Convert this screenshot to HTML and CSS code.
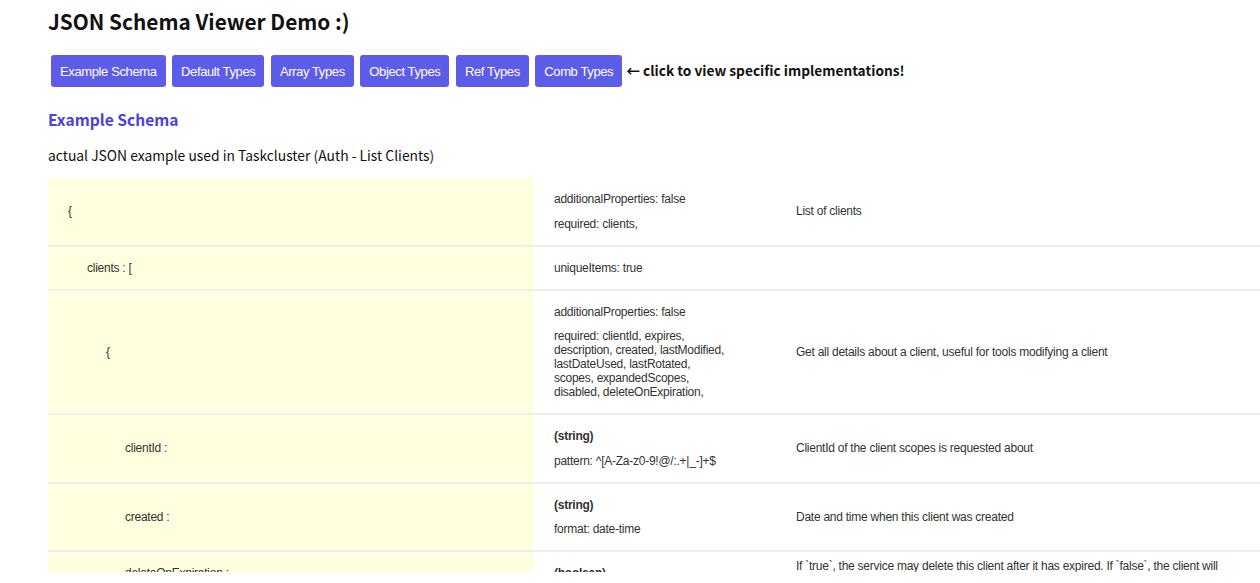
FILE: index.html
```html
<!DOCTYPE html>
<html lang="en">
<head>
<meta charset="utf-8">
<title>JSON Schema Viewer Demo</title>
<link rel="stylesheet" href="styles.css">
</head>
<body>
<h1 class="title">JSON Schema Viewer Demo :)</h1>
<div class="nav">
  <button class="btn">Example Schema</button>
  <button class="btn">Default Types</button>
  <button class="btn">Array Types</button>
  <button class="btn">Object Types</button>
  <button class="btn">Ref Types</button>
  <button class="btn">Comb Types</button>
  <span class="hint">← click to view specific implementations!</span>
</div>
<h2 class="section">Example Schema</h2>
<p class="desc">actual JSON example used in Taskcluster (Auth - List Clients)</p>
<table class="schema">
  <colgroup><col class="c1"><col class="c2"><col class="c3"></colgroup>
  <tr>
    <td class="key"><span class="l0">{</span></td>
    <td class="meta"><div class="stack"><div>additionalProperties: false</div><div>required: clients,</div></div></td>
    <td class="note">List of clients</td>
  </tr>
  <tr>
    <td class="key"><span class="l1">clients : [</span></td>
    <td class="meta"><div class="stack"><div>uniqueItems: true</div></div></td>
    <td class="note"></td>
  </tr>
  <tr>
    <td class="key"><span class="l2">{</span></td>
    <td class="meta"><div class="stack"><div>additionalProperties: false</div><div>required: clientId, expires, description, created, lastModified, lastDateUsed, lastRotated, scopes, expandedScopes, disabled, deleteOnExpiration,</div></div></td>
    <td class="note">Get all details about a client, useful for tools modifying a client</td>
  </tr>
  <tr>
    <td class="key"><span class="l3">clientId :</span></td>
    <td class="meta"><div class="stack"><div class="type">(string)</div><div>pattern: ^[A-Za-z0-9!@/:.+|_-]+$</div></div></td>
    <td class="note">ClientId of the client scopes is requested about</td>
  </tr>
  <tr>
    <td class="key"><span class="l3">created :</span></td>
    <td class="meta"><div class="stack"><div class="type">(string)</div><div>format: date-time</div></div></td>
    <td class="note">Date and time when this client was created</td>
  </tr>
  <tr>
    <td class="key"><span class="l3">deleteOnExpiration :</span></td>
    <td class="meta"><div class="stack"><div class="type">(boolean)</div></div></td>
    <td class="note">If `true`, the service may delete this client after it has expired. If `false`, the client will remain after expiration, although it cannot be used for authentication in that state.</td>
  </tr>
</table>
<div class="hscroll"></div>
</body>
</html>
```
FILE: styles.css
```css
html, body {
  margin: 0;
  padding: 0;
  background: #ffffff;
}
body {
  padding: 0 0 0 48px;
  font-family: "Noto Sans CJK KR", "Noto Sans", sans-serif;
  color: #111;
}
.title {
  margin: 6px 0 0;
  font-size: 20.8px;
  line-height: 30px;
  font-weight: 700;
  color: #111;
}
.nav {
  margin-top: 19px;
  display: flex;
  align-items: center;
  height: 32px;
}
.btn {
  height: 32px;
  margin: 0 3px;
  padding: 0 9px;
  border: none;
  border-radius: 3px;
  background: #5d5ce8;
  color: #fff;
  font-family: "Liberation Sans", Arial, sans-serif;
  font-size: 13px;
  letter-spacing: -0.38px;
}
.btn + .btn {
  margin-left: 3.5px;
}
.hint {
  margin-left: 1px;
  margin-top: -3px;
  font-size: 13.7px;
  font-weight: 700;
  color: #111;
}
.section {
  margin: 20px 0 0;
  font-size: 15.6px;
  line-height: 24px;
  font-weight: 700;
  color: #4a3fe3;
}
.desc {
  margin: 14px 0 0;
  font-size: 13.85px;
  line-height: 20px;
  color: #111;
}
.schema {
  margin-top: 13px;
  width: 1212px;
  border-collapse: collapse;
  table-layout: fixed;
  font-family: "Liberation Sans", Arial, sans-serif;
  font-size: 12px;
  letter-spacing: -0.25px;
  color: #333;
}
.c1 { width: 486px; }
.c2 { width: 242px; }
.schema td {
  padding: 5px 20px;
  border-bottom: 2px solid #eeeeee;
  vertical-align: middle;
}
.schema td.key {
  background: #ffffe0;
}
.l1 { padding-left: 19px; }
.l2 { padding-left: 38px; }
.l3 { padding-left: 57px; }
.stack {
  display: flex;
  flex-direction: column;
  gap: 10.5px;
  padding: 9px 0;
  max-width: 174px;
}
.type {
  font-weight: 700;
}
.hscroll {
  position: fixed;
  left: 0;
  right: 0;
  bottom: 0;
  height: 11px;
  background: #ffffff;
}
```
